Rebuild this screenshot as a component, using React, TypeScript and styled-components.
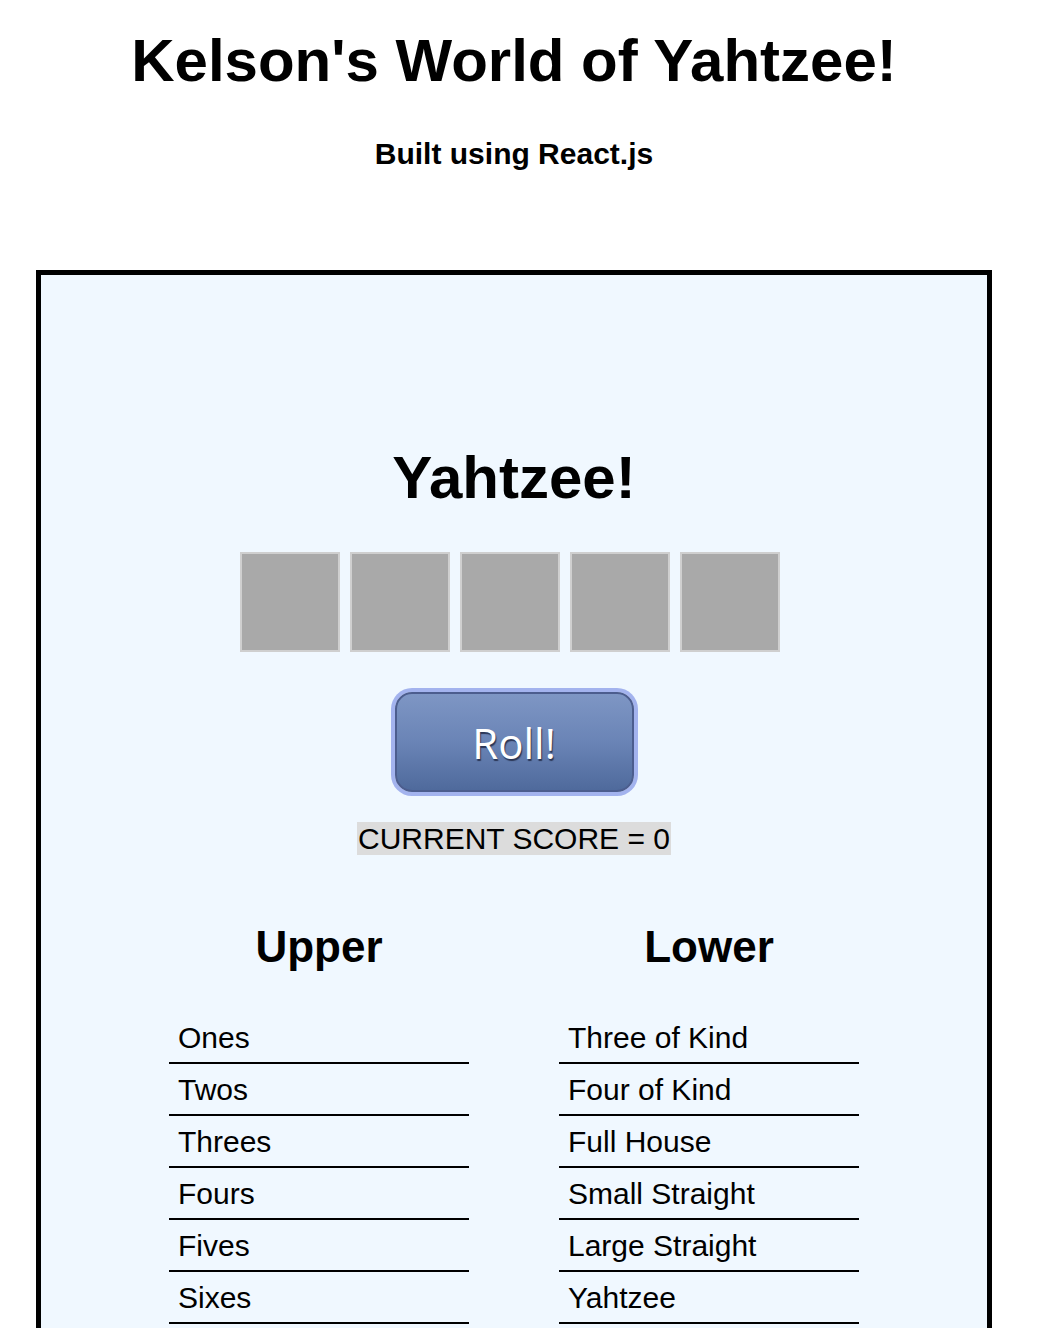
import React from "react";
import styled, { createGlobalStyle } from "styled-components";

const GlobalStyle = createGlobalStyle`
  html, body {
    margin: 0;
    padding: 0;
    background: #ffffff;
  }
  body {
    margin: 8px;
    font-family: "Liberation Sans", Arial, Helvetica, sans-serif;
    color: #000;
  }
`;

const Wrapper = styled.div`
  width: 956px;
  margin-left: 28px;
  display: flex;
  flex-direction: column;
  align-items: center;
`;

const Title = styled.h1`
  margin: 18px 0 0;
  font-size: 60px;
  font-weight: 700;
  line-height: 69px;
  text-align: center;
`;

const Subtitle = styled.h3`
  margin: 42px 0 0;
  font-size: 30px;
  font-weight: 700;
  line-height: 34px;
  text-align: center;
`;

const Board = styled.div`
  box-sizing: border-box;
  width: 956px;
  margin-top: 99px;
  border: 5px solid #000;
  background: #f0f8ff;
  padding: 168px 0 120px;
  display: flex;
  flex-direction: column;
  align-items: center;
`;

const GameTitle = styled.h1`
  margin: 0;
  font-size: 60px;
  font-weight: 700;
  line-height: 69px;
`;

const DiceRow = styled.div`
  margin-top: 40px;
  display: flex;
  gap: 10px;
  padding-right: 8px;
`;

const Die = styled.div`
  box-sizing: border-box;
  width: 100px;
  height: 100px;
  background: #a9a9a9;
  border: 2px solid #cfcfcf;
`;

const RollButton = styled.button`
  margin-top: 40px;
  box-sizing: border-box;
  width: 239px;
  height: 100px;
  border-radius: 17px;
  border: 2px solid #4c5d8e;
  box-shadow: 0 0 0 4px #a3b3ee;
  background: linear-gradient(to bottom, #7e96c4 0%, #6a84b6 50%, #4f6a9c 100%);
  color: #ffffff;
  font-family: "Open Sans", "Liberation Sans", sans-serif;
  font-size: 42px;
  line-height: 1;
  text-shadow: 1px 2px 1px #2b3656;
  cursor: pointer;
  padding: 2px 0 0;
`;

const ScoreLine = styled.div`
  margin-top: 30px;
  font-size: 30px;
  line-height: 34px;
`;

const ScoreText = styled.span`
  background: #dcdcdc;
  padding: 0 1px;
`;

const Columns = styled.div`
  margin-top: 66px;
  display: flex;
  justify-content: center;
  gap: 90px;
`;

const Column = styled.section`
  width: 300px;
  display: flex;
  flex-direction: column;
  align-items: stretch;
`;

const ColumnTitle = styled.h2`
  margin: 0;
  font-size: 44px;
  font-weight: 700;
  line-height: 50px;
  text-align: center;
`;

const List = styled.ul`
  list-style: none;
  margin: 40px 0 0;
  padding: 0;
`;

const Row = styled.li`
  box-sizing: border-box;
  height: 52px;
  padding: 8px 8px 0 9px;
  font-size: 30px;
  line-height: 35px;
  border-bottom: 2px solid #000;
`;

const upper = ["Ones", "Twos", "Threes", "Fours", "Fives", "Sixes"];
const lower = [
  "Three of Kind",
  "Four of Kind",
  "Full House",
  "Small Straight",
  "Large Straight",
  "Yahtzee",
];

export default function App() {
  return (
    <>
      <GlobalStyle />
      <Wrapper>
        <Title>Kelson's World of Yahtzee!</Title>
        <Subtitle>Built using React.js</Subtitle>
        <Board>
          <GameTitle>Yahtzee!</GameTitle>
          <DiceRow>
            {[0, 1, 2, 3, 4].map((i) => (
              <Die key={i} />
            ))}
          </DiceRow>
          <RollButton>Roll!</RollButton>
          <ScoreLine>
            <ScoreText>CURRENT SCORE = 0</ScoreText>
          </ScoreLine>
          <Columns>
            <Column>
              <ColumnTitle>Upper</ColumnTitle>
              <List>
                {upper.map((r) => (
                  <Row key={r}>{r}</Row>
                ))}
              </List>
            </Column>
            <Column>
              <ColumnTitle>Lower</ColumnTitle>
              <List>
                {lower.map((r) => (
                  <Row key={r}>{r}</Row>
                ))}
              </List>
            </Column>
          </Columns>
        </Board>
      </Wrapper>
    </>
  );
}
